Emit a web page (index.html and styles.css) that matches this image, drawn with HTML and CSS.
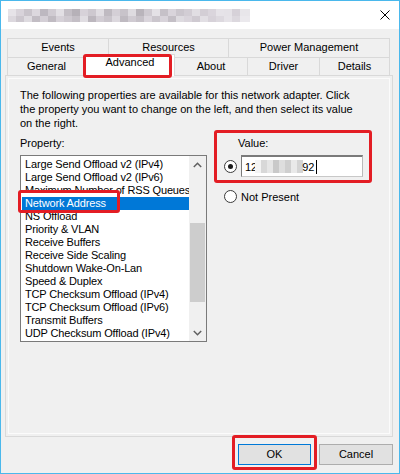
FILE: index.html
```html
<!DOCTYPE html>
<html>
<head>
<meta charset="utf-8">
<link rel="stylesheet" href="styles.css">
</head>
<body>
<div class="window">
  <div class="titlebar">
    <div class="title-blur"></div>
    <svg class="close" width="10" height="10" viewBox="0 0 10 10"><path d="M0.5 0.5 L9.5 9.5 M9.5 0.5 L0.5 9.5" stroke="#000" stroke-width="1" fill="none"/></svg>
  </div>
  <div class="body">
    <div class="tabs">
      <div class="tab-row row1">
        <div class="tab t-events">Events</div>
        <div class="tab t-resources">Resources</div>
        <div class="tab t-power">Power Management</div>
      </div>
      <div class="tab-row row2">
        <div class="tab t-general">General</div>
        <div class="tab t-advanced selected">Advanced<span class="mark mark-tab"></span></div>
        <div class="tab t-about">About</div>
        <div class="tab t-driver">Driver</div>
        <div class="tab t-details">Details</div>
      </div>
    </div>
    <div class="panel">
      <p class="desc">The following properties are available for this network adapter. Click<br>the property you want to change on the left, and then select its value<br>on the right.</p>
      <div class="props">
        <div class="col-left">
          <div class="label">Property:</div>
          <div class="listbox">
            <ul class="items">
              <li>Large Send Offload v2 (IPv4)</li>
              <li>Large Send Offload v2 (IPv6)</li>
              <li>Maximum Number of RSS Queues</li>
              <li class="sel">Network Address</li>
              <li>NS Offload</li>
              <li>Priority &amp; VLAN</li>
              <li>Receive Buffers</li>
              <li>Receive Side Scaling</li>
              <li>Shutdown Wake-On-Lan</li>
              <li>Speed &amp; Duplex</li>
              <li>TCP Checksum Offload (IPv4)</li>
              <li>TCP Checksum Offload (IPv6)</li>
              <li>Transmit Buffers</li>
              <li>UDP Checksum Offload (IPv4)</li>
            </ul>
            <div class="scrollbar">
              <div class="sb-btn"><svg width="9" height="6" viewBox="0 0 9 6"><path d="M0.8 5 L4.5 1.3 L8.2 5" stroke="#606060" stroke-width="1.5" fill="none"/></svg></div>
              <div class="sb-track"><div class="sb-thumb"></div></div>
              <div class="sb-btn"><svg width="9" height="6" viewBox="0 0 9 6"><path d="M0.8 1 L4.5 4.7 L8.2 1" stroke="#606060" stroke-width="1.5" fill="none"/></svg></div>
            </div>
            <span class="mark mark-list"></span>
          </div>
        </div>
        <div class="col-right">
          <div class="label value-label">Value:</div>
          <div class="radio-row row-value">
            <span class="radio checked"></span>
            <div class="input"><span>12</span><span class="value-blur"></span><span>92</span><span class="caret"></span></div>
          </div>
          <div class="radio-row row-np">
            <span class="radio"></span>
            <span class="np-text">Not Present</span>
          </div>
          <span class="mark mark-value"></span>
        </div>
      </div>
    </div>
    <div class="buttons">
      <div class="btn btn-ok">OK<span class="mark mark-ok"></span></div>
      <div class="btn btn-cancel">Cancel</div>
    </div>
  </div>
</div>
</body>
</html>
```
FILE: styles.css
```css
html, body {
  margin: 0;
  padding: 0;
}
body {
  width: 400px;
  height: 474px;
  overflow: hidden;
  background: #f0f0f0;
  font-family: "Liberation Sans", Arial, sans-serif;
  font-size: 11px;
  line-height: 14px;
  color: #000;
}
.window {
  box-sizing: border-box;
  width: 400px;
  height: 474px;
  border: 1px solid #4ab8ec;
  display: flex;
  flex-direction: column;
}
.titlebar {
  flex: none;
  height: 28px;
  background: #fff;
  display: flex;
  align-items: center;
  justify-content: space-between;
  padding: 0 9px 0 7px;
}
.title-blur {
  width: 242px;
  height: 13px;
  background:
    linear-gradient(90deg,
      #e6e3e8 0 8px, #d8d3da 8px 16px, #c9c4cb 16px 24px, #dcd8de 24px 32px,
      #bdb8c0 32px 40px, #d0cbd2 40px 48px, #e2dfe4 48px 56px, #c4bfc6 56px 64px,
      #b6b1b8 64px 72px, #d7d2d9 72px 80px, #cdc8cf 80px 88px, #e0dde2 88px 96px,
      #bfbac1 96px 104px, #d4cfd6 104px 112px, #c8c3ca 112px 120px, #dedbe0 120px 128px,
      #b9b4bb 128px 136px, #cfcad1 136px 144px, #e4e1e6 144px 152px, #c6c1c8 152px 160px,
      #d9d4db 160px 168px, #cbc6cd 168px 176px, #d2cdd4 176px 184px, #e1dee3 184px 192px,
      #d3ced5 192px 200px, #dad5dc 200px 208px, #e6e3e8 208px 216px, #e5e2e7 216px 224px,
      #d6d1d8 224px 232px, #e8e6ea 232px 242px) top left / 242px 7px no-repeat,
    linear-gradient(90deg,
      #dcd8de 0 8px, #ccc7ce 8px 16px, #dedbe0 16px 24px, #c2bdc4 24px 32px,
      #d4cfd6 32px 40px, #c0bbc2 40px 48px, #d6d1d8 48px 56px, #cec9d0 56px 64px,
      #c4bfc6 64px 72px, #e0dde2 72px 80px, #bcb7be 80px 88px, #d2cdd4 88px 96px,
      #c9c4cb 96px 104px, #dcd8de 104px 112px, #bfbac1 112px 120px, #d0cbd2 120px 128px,
      #c6c1c8 128px 136px, #dad5dc 136px 144px, #cbc6cd 144px 152px, #d8d3da 152px 160px,
      #c4bfc6 160px 168px, #dedbe0 168px 176px, #d9d4db 176px 184px, #cfcad1 184px 192px,
      #e2dfe4 192px 200px, #d7d2d9 200px 208px, #ddd9df 208px 216px, #e6e3e8 216px 224px,
      #dcd8de 224px 232px, #ebe9ed 232px 242px) bottom left / 242px 6px no-repeat;
}
.close {
  display: block;
}
.body {
  flex: 1;
  padding: 9px 6px 0 4px;
}
.tabs {
  margin-left: 2px;
}
.tab-row {
  display: flex;
  align-items: flex-start;
}
.row1 {
  height: 19px;
}
.row2 {
  height: 18px;
}
.tab {
  box-sizing: border-box;
  border: 1px solid #d9d9d9;
  border-bottom: none;
  margin-left: -1px;
  text-align: center;
  background: #f0f0f0;
  white-space: nowrap;
}
.tab:first-child {
  margin-left: 0;
}
.row1 .tab {
  height: 19px;
  line-height: 17px;
}
.row2 .tab {
  height: 18px;
  line-height: 17px;
}
.t-events { width: 102px; }
.t-resources { width: 121px; }
.t-power { width: 162px; }
.t-general { width: 79px; }
.t-advanced { width: 90px; }
.t-about { width: 74px; }
.t-driver { width: 73px; }
.t-details { width: 71px; }
.row2 .tab.selected {
  position: relative;
  z-index: 2;
  margin-top: -3px;
  height: 22px;
  line-height: 15px;
  background: #fff;
}
.panel {
  position: relative;
  z-index: 1;
  box-sizing: border-box;
  width: 388px;
  height: 362px;
  border: 1px solid #d9d9d9;
  box-shadow: inset 0 0 0 2px #f0f0f0, inset 0 0 0 3px #fbfbfb;
  padding: 12px 0 0 14px;
}
.desc {
  margin: 0;
  line-height: 14px;
  white-space: nowrap;
}
.props {
  display: flex;
  margin-top: 6px;
}
.col-left {
  width: 187px;
  flex: none;
}
.label {
  height: 14px;
  line-height: 14px;
  margin-bottom: 5px;
}
.listbox {
  position: relative;
  box-sizing: border-box;
  width: 187px;
  height: 187px;
  border: 1px solid #7a7a7a;
  background: #fff;
  display: flex;
}
.items {
  flex: 1;
  min-width: 0;
  list-style: none;
  margin: 0;
  padding: 2px 0 0 1px;
  overflow: hidden;
}
.items li {
  height: 13px;
  line-height: 13px;
  padding-left: 3px;
  white-space: nowrap;
  letter-spacing: -0.15px;
}
.items li.sel {
  background: #0078d7;
  color: #fff;
}
.scrollbar {
  width: 17px;
  flex: none;
  background: #f0f0f0;
  display: flex;
  flex-direction: column;
}
.sb-btn {
  height: 17px;
  display: flex;
  align-items: center;
  justify-content: center;
  flex: none;
}
.sb-btn svg {
  display: block;
}
.sb-track {
  flex: 1;
  padding-top: 50px;
}
.sb-thumb {
  height: 79px;
  margin: 0 1px;
  background: #cdcdcd;
}
.col-right {
  position: relative;
  margin-left: 17px;
  flex: none;
}
.value-label {
  margin-left: 14px;
  margin-bottom: 5px;
}
.radio-row {
  display: flex;
  align-items: center;
}
.row-value {
  height: 22px;
}
.row-np {
  height: 13px;
  margin-top: 13px;
}
.radio {
  position: relative;
  box-sizing: border-box;
  width: 13px;
  height: 13px;
  border: 1px solid #3a3a3a;
  border-radius: 50%;
  background: #fff;
  margin-right: 4px;
  flex: none;
}
.radio.checked::after {
  content: "";
  position: absolute;
  left: 3px;
  top: 3px;
  width: 5px;
  height: 5px;
  border-radius: 50%;
  background: #1a1a1a;
}
.input {
  box-sizing: border-box;
  width: 122px;
  height: 22px;
  border: 1px solid;
  border-color: #7a7a7a #b9b9b9 #c8c8c8 #7a7a7a;
  border-top-width: 2px;
  background: #fff;
  display: flex;
  align-items: center;
  padding-left: 3px;
}
.value-blur {
  width: 48px;
  height: 13px;
  margin: 0 -1px 0 -2px;
  background: linear-gradient(90deg,
    #f4f4f4 0 6px, #d8d8d8 6px 12px, #e6e6e6 12px 18px, #c9c9c9 18px 24px,
    #dedede 24px 30px, #cfcfcf 30px 36px, #e9e9e9 36px 42px, #d4d4d4 42px 48px);
}
.caret {
  width: 1px;
  height: 14px;
  background: #000;
  margin-left: 1px;
}
.buttons {
  display: flex;
  justify-content: flex-end;
  gap: 8px;
  margin-top: 7px;
}
.btn {
  position: relative;
  box-sizing: border-box;
  height: 21px;
  line-height: 19px;
  text-align: center;
  background: #e1e1e1;
  border: 1px solid #adadad;
}
.btn-ok {
  width: 73px;
  border-color: #0078d7;
}
.btn-cancel {
  width: 74px;
}
.mark {
  position: absolute;
  box-sizing: border-box;
  border: 3px solid #e31d24;
  border-radius: 3px;
  z-index: 5;
}
.mark-tab {
  left: -3px;
  top: -1px;
  width: 89px;
  height: 24px;
}
.mark-list {
  left: -3px;
  top: 34px;
  width: 102px;
  height: 23px;
  box-shadow: inset 0 4px 0 #fff;
}
.mark-value {
  left: -10px;
  top: -6px;
  width: 158px;
  height: 53px;
}
.mark-ok {
  left: -7px;
  top: -10px;
  width: 85px;
  height: 35px;
}
```
